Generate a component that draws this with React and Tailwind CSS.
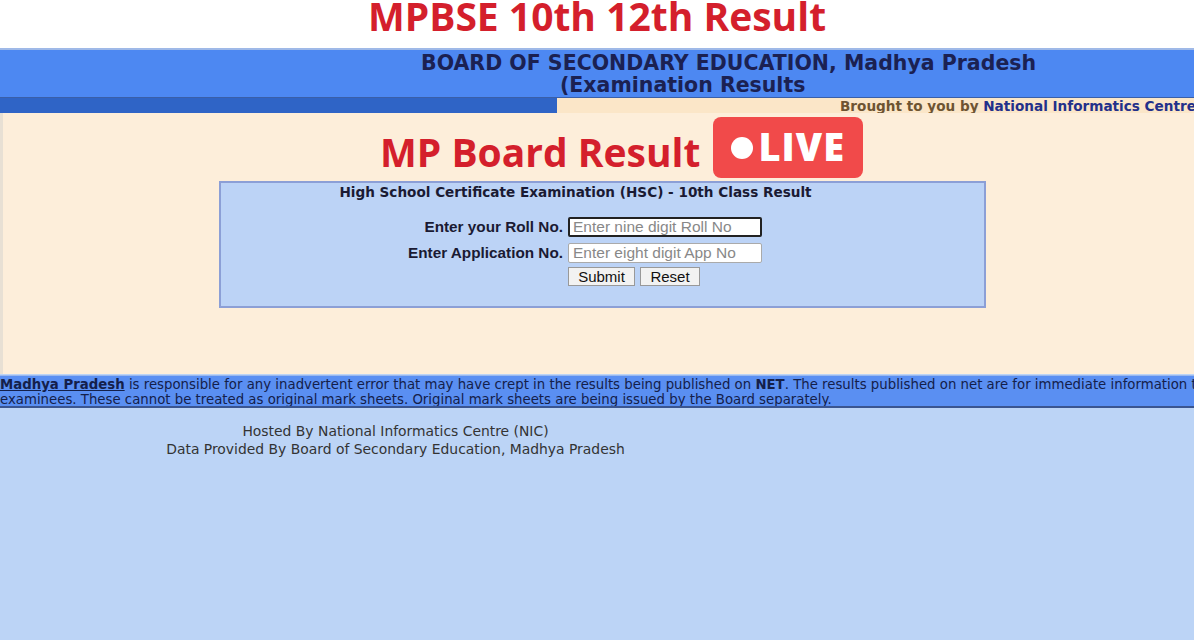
import React from "react";

const verdana = { fontFamily: '"DejaVu Sans", Verdana, sans-serif' };
const openSans = { fontFamily: '"Open Sans", sans-serif' };
const arial = { fontFamily: '"Liberation Sans", Arial, sans-serif' };

const App = () => {
  return (
    <div className="w-[1194px] h-[640px] overflow-hidden bg-[#bcd4f6] flex flex-col" style={verdana}>
      {/* page title */}
      <div className="h-[48px] bg-white flex items-start justify-center shrink-0">
        <h1 className="text-[39px] font-bold text-[#d41f2c] leading-[34px] -mt-[1px]" style={openSans}>
          MPBSE 10th 12th Result
        </h1>
      </div>

      {/* header band */}
      <div className="h-[50px] bg-[#4d88f2] border-t-2 border-[#9fb9e8] border-b border-b-[#3a5fa8] shrink-0 flex flex-col justify-center text-[#1b2152] font-bold text-[20.5px] leading-[22px]">
        <div className="pl-[421px] whitespace-nowrap">BOARD OF SECONDARY EDUCATION, Madhya Pradesh</div>
        <div className="pl-[560px] whitespace-nowrap">(Examination Results</div>
      </div>

      {/* strip */}
      <div className="h-[15px] flex shrink-0">
        <div className="w-[557px] bg-[#2f64c6]" />
        <div className="flex-1 bg-[#fbe6c8] flex items-center pl-[283px] pt-[1px] text-[13.6px] font-bold whitespace-nowrap overflow-hidden">
          <span className="text-[#6e5432]">Brought to you by&nbsp;</span>
          <span className="text-[#23308a]">National Informatics Centre</span>
        </div>
      </div>

      {/* main panel */}
      <div className="h-[261px] bg-[#fdeeda] border-l-[3px] border-[#e8e0d4] shrink-0 flex flex-col">
        <div className="flex items-center pt-[4px] pl-[377px]">
          <span className="text-[39px] font-bold text-[#d41f2c] leading-none pt-[8px]" style={openSans}>
            MP Board Result
          </span>
          <div className="ml-[13px] w-[150px] h-[61px] bg-[#f14a4a] rounded-[8px] flex items-center pl-[18px] gap-[5px]">
            <span className="w-[22px] h-[22px] rounded-full bg-white" />
            <span className="text-white text-[38px] font-extrabold leading-none tracking-[1px] pb-[3px]" style={openSans}>LIVE</span>
          </div>
        </div>

        <div className="w-[767px] h-[127px] ml-[216px] mt-[3px] bg-[#bcd3f6] border-2 border-[#8c9fd6] flex flex-col">
          <div className="text-[13.6px] font-bold text-[#1a1a33] text-center pr-[54px] leading-[18px]">
            High School Certificate Examination (HSC) - 10th Class Result
          </div>
          <div className="mt-[16px] grid grid-cols-[342px_200px] gap-y-[6px] gap-x-[5px]" style={arial}>
            <label className="text-right text-[15.3px] font-bold text-[#1a1a33] self-center leading-none">Enter your Roll No.</label>
            <input className="w-[194px] h-[20px] bg-white border-2 border-[#222] rounded-[2px] px-[3px] text-[15.5px] placeholder:text-[#888] outline-none" placeholder="Enter nine digit Roll No" />
            <label className="text-right text-[15.3px] font-bold text-[#1a1a33] self-center leading-none">Enter Application No.</label>
            <input className="w-[194px] h-[20px] bg-white border border-[#aaa] rounded-[2px] px-[4px] text-[15.5px] placeholder:text-[#888] outline-none" placeholder="Enter eight digit App No" />
            <div />
            <div className="flex gap-[5px] -mt-[2px]">
              <button className="w-[67px] h-[19px] bg-[#f2f2f2] border border-[#999] text-[15px] text-[#111] leading-none">Submit</button>
              <button className="w-[60px] h-[19px] bg-[#f2f2f2] border border-[#999] text-[15px] text-[#111] leading-none">Reset</button>
            </div>
          </div>
        </div>
      </div>

      {/* disclaimer */}
      <div className="h-[33px] mt-[1px] bg-[#5a8ff2] border-t border-[#9ab8ee] border-b-2 border-b-[#3a5590] shrink-0 text-[13.3px] leading-[15px] text-[#14204a] whitespace-nowrap overflow-hidden pt-[1px]">
        <div>
          <a className="font-bold underline text-[#14204a]">Madhya Pradesh</a> is responsible for any inadvertent error that may have crept in the results being published on <b>NET</b>. The results published on net are for immediate information to the
        </div>
        <div>examinees. These cannot be treated as original mark sheets. Original mark sheets are being issued by the Board separately.</div>
      </div>

      {/* footer */}
      <div className="flex flex-col items-center w-[791px] pt-[14px] text-[13.9px] leading-[18px] text-[#333]">
        <div>Hosted By National Informatics Centre (NIC)</div>
        <div>Data Provided By Board of Secondary Education, Madhya Pradesh</div>
      </div>
    </div>
  );
};

export default App;
